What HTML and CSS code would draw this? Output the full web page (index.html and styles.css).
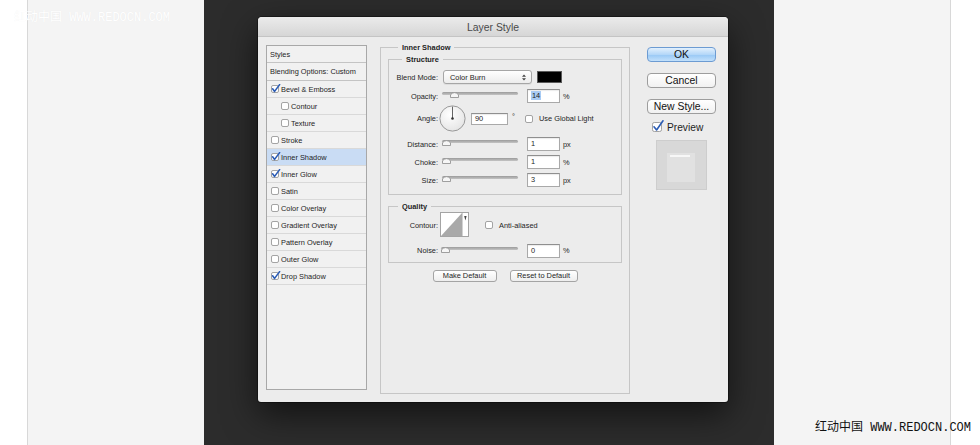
FILE: index.html
```html
<!DOCTYPE html>
<html>
<head>
<meta charset="utf-8">
<title>Layer Style</title>
<link rel="stylesheet" href="styles.css">
</head>
<body>
<div class="page">
  <div class="edge edge-left"></div>
  <div class="side"></div>
  <div class="stage">
    <div class="dialog">
      <div class="titlebar">Layer Style</div>
      <div class="dialog-body">
        <ul class="styles-list">
          <li class="item head">Styles</li>
          <li class="item head blend">Blending Options: Custom</li>
          <li class="item"><svg class="cb" viewBox="0 0 10 10"><rect x="0.5" y="1.5" width="7" height="7" rx="1.5"/><path d="M1.6 4.8 L3.6 7.4 L8.6 0.6"/></svg>Bevel &amp; Emboss</li>
          <li class="item sub"><svg class="cb" viewBox="0 0 10 10"><rect x="0.5" y="1.5" width="7" height="7" rx="1.5"/></svg>Contour</li>
          <li class="item sub"><svg class="cb" viewBox="0 0 10 10"><rect x="0.5" y="1.5" width="7" height="7" rx="1.5"/></svg>Texture</li>
          <li class="item"><svg class="cb" viewBox="0 0 10 10"><rect x="0.5" y="1.5" width="7" height="7" rx="1.5"/></svg>Stroke</li>
          <li class="item selected"><svg class="cb" viewBox="0 0 10 10"><rect x="0.5" y="1.5" width="7" height="7" rx="1.5"/><path d="M1.6 4.8 L3.6 7.4 L8.6 0.6"/></svg>Inner Shadow</li>
          <li class="item"><svg class="cb" viewBox="0 0 10 10"><rect x="0.5" y="1.5" width="7" height="7" rx="1.5"/><path d="M1.6 4.8 L3.6 7.4 L8.6 0.6"/></svg>Inner Glow</li>
          <li class="item"><svg class="cb" viewBox="0 0 10 10"><rect x="0.5" y="1.5" width="7" height="7" rx="1.5"/></svg>Satin</li>
          <li class="item"><svg class="cb" viewBox="0 0 10 10"><rect x="0.5" y="1.5" width="7" height="7" rx="1.5"/></svg>Color Overlay</li>
          <li class="item"><svg class="cb" viewBox="0 0 10 10"><rect x="0.5" y="1.5" width="7" height="7" rx="1.5"/></svg>Gradient Overlay</li>
          <li class="item"><svg class="cb" viewBox="0 0 10 10"><rect x="0.5" y="1.5" width="7" height="7" rx="1.5"/></svg>Pattern Overlay</li>
          <li class="item"><svg class="cb" viewBox="0 0 10 10"><rect x="0.5" y="1.5" width="7" height="7" rx="1.5"/></svg>Outer Glow</li>
          <li class="item"><svg class="cb" viewBox="0 0 10 10"><rect x="0.5" y="1.5" width="7" height="7" rx="1.5"/><path d="M1.6 4.8 L3.6 7.4 L8.6 0.6"/></svg>Drop Shadow</li>
        </ul>

        <div class="main">
          <div class="group outer">
            <div class="group-title t-outer">Inner Shadow</div>

            <div class="group structure">
              <div class="group-title t-structure">Structure</div>
              <div class="rows">
                <div class="row r-blend">
                  <span class="label">Blend Mode:</span>
                  <div class="select"><span>Color Burn</span><svg class="updown" viewBox="0 0 5 8"><path d="M0 3.2 L2.5 0.4 L5 3.2Z M0 4.8 L2.5 7.6 L5 4.8Z"/></svg></div>
                  <div class="swatch"></div>
                </div>
                <div class="row r-opacity">
                  <span class="label">Opacity:</span>
                  <div class="slider"><div class="track"></div><svg class="thumb" style="left:8px" viewBox="0 0 9 7"><path d="M0.5 6.5V3.8Q4.5 -0.6 8.5 3.8V6.5Z"/></svg></div>
                  <div class="field"><span class="sel">14</span></div>
                  <span class="unit">%</span>
                </div>
                <div class="row r-angle">
                  <span class="label">Angle:</span>
                  <svg class="dial" viewBox="0 0 27 27"><defs><radialGradient id="dg" cx="0.4" cy="0.35" r="0.7"><stop offset="0" stop-color="#ffffff"/><stop offset="1" stop-color="#e4e4e4"/></radialGradient></defs><circle cx="13.5" cy="13.5" r="12.6" fill="url(#dg)" stroke="#8e8e8e" stroke-width="0.9"/><line x1="13.5" y1="13.5" x2="13.5" y2="1.6" stroke="#555" stroke-width="0.9"/><circle cx="13.5" cy="13.5" r="1.3" fill="#333"/></svg>
                  <div class="field f-angle">90</div>
                  <span class="deg">°</span>
                  <svg class="cb cb-global" viewBox="0 0 10 10"><rect x="0.5" y="1.5" width="7" height="7" rx="1.5"/></svg>
                  <span class="cb-text">Use Global Light</span>
                </div>
                <div class="row r-distance">
                  <span class="label">Distance:</span>
                  <div class="slider"><div class="track"></div><svg class="thumb" style="left:0px" viewBox="0 0 9 7"><path d="M0.5 6.5V3.8Q4.5 -0.6 8.5 3.8V6.5Z"/></svg></div>
                  <div class="field">1</div>
                  <span class="unit">px</span>
                </div>
                <div class="row">
                  <span class="label">Choke:</span>
                  <div class="slider"><div class="track"></div><svg class="thumb" style="left:0px" viewBox="0 0 9 7"><path d="M0.5 6.5V3.8Q4.5 -0.6 8.5 3.8V6.5Z"/></svg></div>
                  <div class="field">1</div>
                  <span class="unit">%</span>
                </div>
                <div class="row">
                  <span class="label">Size:</span>
                  <div class="slider"><div class="track"></div><svg class="thumb" style="left:0px" viewBox="0 0 9 7"><path d="M0.5 6.5V3.8Q4.5 -0.6 8.5 3.8V6.5Z"/></svg></div>
                  <div class="field">3</div>
                  <span class="unit">px</span>
                </div>
              </div>
            </div>

            <div class="group quality">
              <div class="group-title t-quality">Quality</div>
              <div class="rows q-rows">
                <div class="row r-contour">
                  <span class="label">Contour:</span>
                  <svg class="contour" viewBox="0 0 29 25"><rect x="0.5" y="0.5" width="28" height="24" fill="#fff" stroke="#a4a4a4"/><path d="M1 24 L22 1 L22 24Z" fill="#a9a9a9"/><line x1="22.5" y1="1" x2="22.5" y2="24" stroke="#d2d2d2"/><path d="M24.2 4 L26.6 4 L25.4 8.5Z" fill="#444"/></svg>
                  <svg class="cb cb-anti" viewBox="0 0 10 10"><rect x="0.5" y="1.5" width="7" height="7" rx="1.5"/></svg>
                  <span class="cb-text">Anti-aliased</span>
                </div>
                <div class="row r-noise">
                  <span class="label">Noise:</span>
                  <div class="slider s-noise"><div class="track"></div><svg class="thumb" style="left:0px" viewBox="0 0 9 7"><path d="M0.5 6.5V3.8Q4.5 -0.6 8.5 3.8V6.5Z"/></svg></div>
                  <div class="field">0</div>
                  <span class="unit">%</span>
                </div>
              </div>
            </div>

            <div class="defaults">
              <button class="btn-small b-make">Make Default</button>
              <button class="btn-small b-reset">Reset to Default</button>
            </div>
          </div>
        </div>

        <div class="actions">
          <button class="btn btn-ok">OK</button>
          <button class="btn">Cancel</button>
          <button class="btn">New Style...</button>
          <div class="preview-row">
            <svg class="cb-big" viewBox="0 0 13 12"><rect x="0.5" y="2.5" width="9" height="9" rx="1.8"/><path d="M2 6.8 L4.6 10 L11 0.8"/></svg>
            <span>Preview</span>
          </div>
          <div class="preview-thumb"><div class="preview-shape"><div class="preview-bar"></div></div></div>
        </div>
      </div>
    </div>
  </div>
  <div class="side"></div>
  <div class="edge edge-right"></div>
</div>
<div class="watermark wm-top">红动中国 WWW.REDOCN.COM</div>
<div class="watermark wm-bottom">红动中国 WWW.REDOCN.COM</div>
</body>
</html>
```

FILE: styles.css
```css
* { box-sizing: border-box; }
html, body { margin: 0; padding: 0; }
body {
  width: 980px;
  height: 445px;
  overflow: hidden;
  position: relative;
  background: #f4f4f4;
  font-family: "Liberation Sans", Arial, sans-serif;
}
.page { display: flex; height: 445px; }
.edge-left { width: 28px; background: #fff; border-right: 1px solid #d8d8d8; }
.edge-right { width: 30px; background: #fff; border-left: 1px solid #d8d8d8; }
.side { width: 176px; background: #f4f4f4; }
.stage {
  width: 570px;
  background: #2c2c2c;
  padding: 17px 0 0 54px;
}

.dialog {
  width: 470px;
  height: 385px;
  background: #ececec;
  border-radius: 4px 4px 3px 3px;
  box-shadow: 0 12px 34px rgba(0, 0, 0, 0.6), 0 0 0 1px rgba(0, 0, 0, 0.35);
  overflow: hidden;
}
.titlebar {
  height: 20px;
  line-height: 21px;
  text-align: center;
  font-size: 10.4px;
  color: #4a4a4a;
  background: linear-gradient(#ebebeb, #d6d6d6);
  border-bottom: 1px solid #c4c4c4;
}
.dialog-body {
  display: flex;
  align-items: flex-start;
  padding: 8px 12px 0 8px;
  font-size: 7.4px;
  color: #1e1e1e;
}

/* left styles list */
.styles-list {
  list-style: none;
  margin: 0;
  padding: 0;
  width: 101px;
  height: 345px;
  flex: none;
  background: #f1f1f1;
  border: 1px solid #a8a8a8;
}
.item {
  display: flex;
  align-items: center;
  height: 17px;
  padding-left: 4px;
  border-bottom: 1px solid #d9d9d9;
  white-space: nowrap;
}
.item.head { padding-left: 3px; border-bottom-color: #c4c4c4; }
.item.blend { height: 18px; }
.item.sub { padding-left: 14px; }
.item.selected { background: #c9dcf4; }

.cb { width: 10px; height: 10px; flex: none; }
.cb rect, .cb-big rect { fill: #fff; stroke: #9a9a9a; stroke-width: 0.9; }
.cb path, .cb-big path {
  fill: none;
  stroke: #2b5cb5;
  stroke-width: 1.6;
  stroke-linecap: round;
  stroke-linejoin: round;
}

/* main panel */
.main { width: 250px; margin-left: 13px; margin-top: 2px; flex: none; }
.group { border: 1px solid #c6c6c6; }
.outer { height: 347px; padding: 0 7px; }
.group-title {
  width: max-content;
  margin-top: -5px;
  padding: 0 4px;
  line-height: 9px;
  height: 9px;
  font-weight: bold;
  background: #ececec;
}
.t-outer { margin-left: 10px; }
.t-structure { margin-left: 13px; }
.t-quality { margin-left: 9px; }
.structure { margin-top: 7px; }
.rows { display: flex; flex-direction: column; padding: 4px 0 5px; }
.q-rows { padding: 1px 0 3px; }
.quality { margin-top: 11px; }

.row { display: flex; align-items: center; height: 18px; white-space: nowrap; }
.label { width: 49px; flex: none; text-align: right; }
.r-opacity { margin-top: 1px; }
.r-angle { height: 27px; }
.r-distance { margin-top: 3px; }
.r-contour { height: 26px; }
.r-noise { height: 17px; margin-top: 4px; }

.select {
  display: flex;
  align-items: center;
  justify-content: space-between;
  margin-left: 5px;
  width: 89px;
  height: 14px;
  padding: 0 5px 0 6px;
  border: 1px solid #a6a6a6;
  border-radius: 3px;
  background: linear-gradient(#ffffff, #ededed);
  box-shadow: 0 1px 0 rgba(0, 0, 0, 0.06);
}
.updown { width: 4px; height: 7px; }
.updown path { fill: #444; }
.swatch {
  margin-left: 5px;
  width: 25px;
  height: 12px;
  background: #000;
  border: 1px solid #5a5a5a;
}

.slider { position: relative; margin-left: 4px; width: 76px; height: 12px; flex: none; }
.s-noise { margin-left: 3px; width: 77px; }
.track {
  margin-top: 2px;
  height: 3px;
  border-radius: 2px;
  background: linear-gradient(#9b9b9b, #c4c4c4);
}
.thumb { position: absolute; top: 1px; width: 9px; height: 7px; }
.thumb path { fill: #f6f6f6; stroke: #8a8a8a; stroke-width: 0.8; }

.field {
  margin-left: 9px;
  width: 33px;
  height: 14px;
  flex: none;
  padding-left: 3px;
  line-height: 12px;
  background: #fff;
  border: 1px solid #a9a9a9;
  border-top-color: #8f8f8f;
  box-shadow: inset 0 1px 1px rgba(0, 0, 0, 0.08);
}
.sel { background: #a9cbf3; padding: 0 1px; }
.unit { margin-left: 3px; }
.dial { margin-left: 1px; width: 27px; height: 27px; flex: none; }
.f-angle { margin-left: 5px; width: 37px; height: 12px; line-height: 10px; }
.deg { margin-left: 4px; margin-top: -5px; }
.cb-global { margin-left: 10px; }
.cb-text { margin-left: 4px; }
.contour { margin-left: 2px; width: 29px; height: 25px; flex: none; margin-top: -2px; }
.cb-anti { margin-left: 16px; }

.defaults { display: flex; justify-content: center; gap: 13px; margin-top: 7px; }
.btn-small {
  height: 12px;
  padding: 0;
  font-family: inherit;
  font-size: 7.4px;
  color: #1e1e1e;
  line-height: 10px;
  background: linear-gradient(#ffffff, #eeeeee);
  border: 1px solid #a4a4a4;
  border-radius: 3px;
}
.b-make { width: 64px; }
.b-reset { width: 68px; }

/* right actions */
.actions { width: 69px; margin-left: 17px; margin-top: 2px; flex: none; display: flex; flex-direction: column; }
.btn {
  height: 15px;
  margin-bottom: 11px;
  padding: 0;
  font-family: inherit;
  font-size: 10.4px;
  line-height: 13px;
  color: #111;
  background: linear-gradient(#ffffff, #f1f1f1);
  border: 1px solid #9d9d9d;
  border-radius: 4px;
}
.btn-ok {
  background: linear-gradient(#e2f0fd, #b4d7f8 50%, #98c8f5 52%, #c2e0fb);
  border-color: #6c9bd2;
}
.preview-row { display: flex; align-items: center; margin-top: -3px; height: 10px; padding-left: 5px; font-size: 10.2px; }
.cb-big { width: 13px; height: 12px; margin-top: -2px; flex: none; }
.preview-row span { margin-left: 2px; }
.preview-thumb {
  margin: 8px 0 0 9px;
  width: 51px;
  height: 50px;
  background: #d8d8d8;
  border: 1px solid #cdcdcd;
  padding: 12px 0 0 10px;
}
.preview-shape { width: 28px; height: 29px; background: #e1e1e1; padding: 2px 0 0 3px; }
.preview-bar { width: 20px; height: 2px; background: #f7f7f7; }

/* watermarks */
.watermark {
  position: absolute;
  font-family: "Liberation Mono", "Noto Sans CJK SC", monospace;
  font-size: 12px;
  line-height: 14px;
  white-space: nowrap;
}
.wm-top { left: 14px; top: 11px; color: #fff; text-shadow: 0 0 1px rgba(0, 0, 0, 0.06); }
.wm-bottom { left: 815px; top: 421px; color: #111; }
```
